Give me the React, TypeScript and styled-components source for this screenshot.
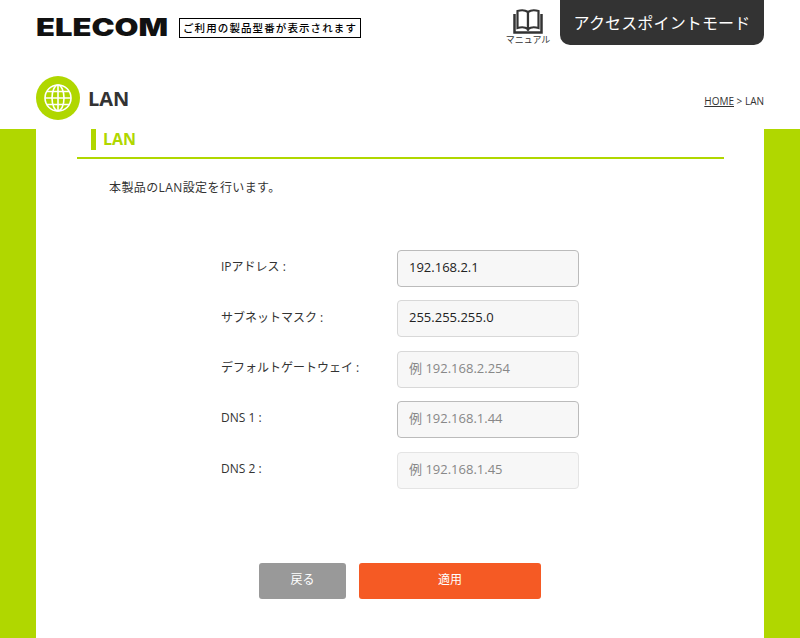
import styled, { createGlobalStyle } from 'styled-components';

const GlobalStyle = createGlobalStyle`
  html, body {
    margin: 0;
    padding: 0;
    height: 638px;
    overflow: hidden;
    background: #fff;
    color: #333;
    font-family: 'Open Sans', 'Noto Sans CJK JP', sans-serif;
  }
  * {
    box-sizing: border-box;
  }
`;

const lime = '#b0d700';

const Header = styled.header`
  height: 129px;
  padding: 0 36px;
  background: #fff;
`;

const TopBar = styled.div`
  height: 76px;
  display: flex;
  align-items: flex-start;
`;

const LogoArea = styled.div`
  flex: 1;
  display: flex;
  align-items: center;
  gap: 11px;
  padding-top: 18px;
`;

const Logo = styled.div`
  width: 132px;
  height: 20px;
  color: #111;
  font-family: Inter, sans-serif;
  font-size: 24px;
  font-weight: 900;
  line-height: 20px;
  white-space: nowrap;
  transform: scaleX(1.29);
  transform-origin: left center;
`;

const ModelBox = styled.div`
  width: 182px;
  height: 20px;
  border: 1px solid #000;
  color: #000;
  font-size: 10.5px;
  font-weight: 500;
  line-height: 18px;
  letter-spacing: 1.1px;
  padding-left: 3px;
  white-space: nowrap;
`;

const ManualLink = styled.a`
  width: 46px;
  margin-right: 9px;
  padding-top: 9px;
  display: flex;
  flex-direction: column;
  align-items: center;
  color: #333;
  font-size: 9px;
  line-height: 12px;
  white-space: nowrap;
`;

const ModeBadge = styled.div`
  width: 204px;
  height: 45px;
  background: #333;
  color: #fff;
  border-radius: 0 0 10px 10px;
  font-size: 16px;
  line-height: 47px;
  letter-spacing: 0.15px;
  text-align: center;
`;

const TitleRow = styled.div`
  display: flex;
  align-items: center;
  height: 44px;
`;

const TitleIcon = styled.div`
  width: 44px;
  height: 44px;
  border-radius: 50%;
  background: ${lime};
  display: flex;
  align-items: center;
  justify-content: center;
`;

const PageTitle = styled.h1`
  flex: 1;
  margin: 0 0 0 8px;
  font-size: 20px;
  font-weight: 700;
  color: #333;
`;

const Breadcrumb = styled.div`
  font-size: 10px;
  margin-top: 6px;
  a {
    color: #333;
    text-decoration: underline;
  }
`;

const Page = styled.div`
  height: 509px;
  background: ${lime};
  padding: 0 36px;
`;

const Content = styled.main`
  height: 100%;
  background: #fff;
  padding: 0 40px 0 41px;
`;

const SectionTitle = styled.h2`
  height: 30px;
  margin: 0;
  padding-left: 14px;
  border-bottom: 2px solid ${lime};
  color: ${lime};
  font-size: 16px;
  font-weight: 700;
  line-height: 20px;
  position: relative;
  &::before {
    content: '';
    position: absolute;
    left: 14px;
    top: 0;
    width: 5px;
    height: 21px;
    background: ${lime};
  }
  span {
    padding-left: 12px;
  }
`;

const Description = styled.p`
  margin: 20px 0 0 32px;
  font-size: 12px;
  line-height: 18px;
  letter-spacing: 0.4px;
  color: #333;
`;

const Form = styled.form`
  margin: 52.75px 0 0 144px;
  display: flex;
  flex-direction: column;
  gap: 13.5px;
`;

const Row = styled.div`
  display: flex;
  align-items: center;
`;

const Label = styled.label`
  width: 176px;
  padding-bottom: 4px;
  font-size: 12px;
  color: #333;
`;

const Input = styled.input<{ $edge: string }>`
  width: 182px;
  height: 37px;
  padding: 0 11px 3px;
  background: #f7f7f7;
  border: 1px solid ${(p) => p.$edge};
  border-radius: 4px;
  font-family: inherit;
  font-size: 13px;
  color: #222;
  outline: none;
  &::placeholder {
    color: #888;
    opacity: 1;
  }
`;

const Actions = styled.div`
  margin: 74.25px 0 0 182px;
  display: flex;
  gap: 13px;
`;

const Button = styled.button<{ $primary?: boolean }>`
  width: ${(p) => (p.$primary ? '182px' : '87px')};
  height: 36px;
  padding: 0 0 4px;
  border: 0;
  border-radius: 3px;
  background: ${(p) => (p.$primary ? '#f55a24' : '#999')};
  color: #fff;
  font-family: inherit;
  font-size: 12px;
`;

const fields = [
  { label: 'IPアドレス :', value: '192.168.2.1', placeholder: '', edge: '#bbb' },
  { label: 'サブネットマスク :', value: '255.255.255.0', placeholder: '', edge: '#d8d8d8' },
  { label: 'デフォルトゲートウェイ :', value: '', placeholder: '例 192.168.2.254', edge: '#d8d8d8' },
  { label: 'DNS 1 :', value: '', placeholder: '例 192.168.1.44', edge: '#bbb' },
  { label: 'DNS 2 :', value: '', placeholder: '例 192.168.1.45', edge: '#e4e4e4' },
];

function BookIcon() {
  return (
    <svg width="30" height="25" viewBox="0 0 30 25" fill="none" stroke="#333">
      <path d="M1.500 5v18.500h27V5" strokeWidth="2.500" />
      <path d="M4.500 2c4-1.200 8-.8 10.500 1v17c-2.500-1.800-6.500-2.200-10.500-1z" strokeWidth="2.200" fill="#fff" />
      <path d="M25.500 2c-4-1.200-8-.8-10.500 1v17c2.500-1.800 6.500-2.200 10.500-1z" strokeWidth="2.200" fill="#fff" />
    </svg>
  );
}

function GlobeIcon() {
  return (
    <svg width="30" height="30" viewBox="0 0 30 30" fill="none" stroke="#fff" strokeWidth="1.600">
      <circle cx="15" cy="15" r="13" />
      <ellipse cx="15" cy="15" rx="6" ry="13" />
      <path d="M15 2v26M2 15h26M4 8.500h22M4 21.500h22" />
    </svg>
  );
}

export default function App() {
  return (
    <>
      <GlobalStyle />
      <Header>
        <TopBar>
          <LogoArea>
            <Logo>ELECOM</Logo>
            <ModelBox>ご利用の製品型番が表示されます</ModelBox>
          </LogoArea>
          <ManualLink>
            <BookIcon />
            マニュアル
          </ManualLink>
          <ModeBadge>アクセスポイントモード</ModeBadge>
        </TopBar>
        <TitleRow>
          <TitleIcon>
            <GlobeIcon />
          </TitleIcon>
          <PageTitle>LAN</PageTitle>
          <Breadcrumb>
            <a>HOME</a> &gt; LAN
          </Breadcrumb>
        </TitleRow>
      </Header>
      <Page>
        <Content>
          <SectionTitle>
            <span>LAN</span>
          </SectionTitle>
          <Description>本製品のLAN設定を行います。</Description>
          <Form>
            {fields.map((f) => (
              <Row key={f.label}>
                <Label>{f.label}</Label>
                <Input $edge={f.edge} defaultValue={f.value} placeholder={f.placeholder} />
              </Row>
            ))}
          </Form>
          <Actions>
            <Button type="button">戻る</Button>
            <Button type="button" $primary>
              適用
            </Button>
          </Actions>
        </Content>
      </Page>
    </>
  );
}
